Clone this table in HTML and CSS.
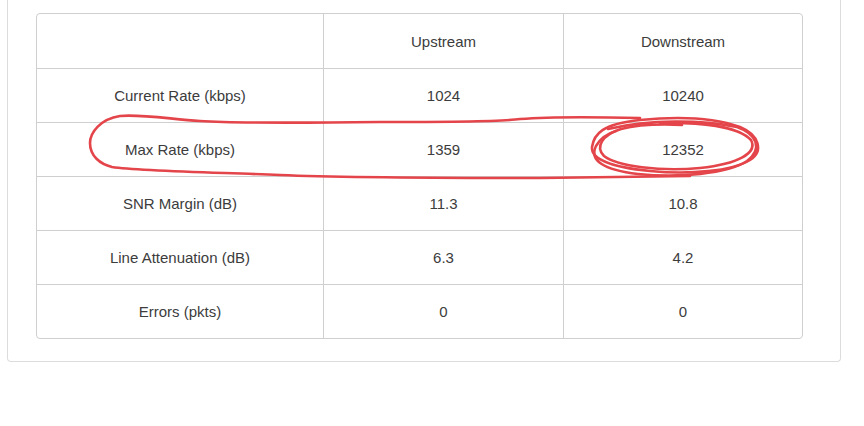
FILE: index.html
```html
<!DOCTYPE html>
<html lang="en">
<head>
<meta charset="utf-8">
<title>DSL Status</title>
<link rel="stylesheet" href="styles.css">
</head>
<body>
<div class="page">
  <div class="panel">
    <div class="table-wrap">
      <table class="stats">
        <thead>
          <tr><th class="label"></th><th>Upstream</th><th>Downstream</th></tr>
        </thead>
        <tbody>
          <tr><td class="label">Current Rate (kbps)</td><td>1024</td><td>10240</td></tr>
          <tr><td class="label">Max Rate (kbps)</td><td>1359</td><td>12352</td></tr>
          <tr><td class="label">SNR Margin (dB)</td><td>11.3</td><td>10.8</td></tr>
          <tr><td class="label">Line Attenuation (dB)</td><td>6.3</td><td>4.2</td></tr>
          <tr><td class="label">Errors (pkts)</td><td>0</td><td>0</td></tr>
        </tbody>
      </table>
    </div>
  </div>
  <svg class="marks" width="864" height="426" viewBox="0 0 864 426" aria-hidden="true">
    <g fill="none" stroke="#e4454a" stroke-width="2.6" stroke-linecap="round" stroke-linejoin="round">
      <path d="M640 118 C600 117 545 117 520 119 C500 122 440 122 380 122 C300 123 230 123 200 121 C170 119 140 114 120 116 C100 119 90 133 90 143 C90 156 100 164 112 167 C140 171 200 172 280 175 C350 178 450 178 540 178 C600 177 650 177 690 176"/>
      <path d="M640 120 C602 124 594 134 592 147 C591 159 610 167 650 171 C690 175 732 171 750 160 C764 151 759 135 740 127 C715 118 680 116 640 120 Z"/>
      <path d="M608 129 C650 119 702 120 737 127 C757 134 763 149 747 161 C728 174 678 178 638 174 C603 170 589 160 596 146 C600 139 606 134 616 131"/>
      <path d="M660 123 C700 122 738 126 751 140 C758 153 738 164 700 168 C660 172 617 166 604 156 C595 147 602 135 621 129 C641 124 661 124 682 125"/>
    </g>
  </svg>
</div>
</body>
</html>
```

FILE: styles.css
```css
html, body {
  margin: 0;
  padding: 0;
  background: #ffffff;
}

.page {
  position: relative;
  width: 864px;
  height: 426px;
  overflow: hidden;
}

.panel {
  margin-left: 7px;
  width: 804px;
  box-sizing: content-box;
  border: 1px solid #dcdcdc;
  border-top: 0;
  border-radius: 0 0 4px 4px;
  padding: 13px 0 22px 28px;
}

.table-wrap {
  width: 765px;
  border: 1px solid #cfcfcf;
  border-radius: 4px;
  overflow: hidden;
}

.stats {
  width: 100%;
  border-collapse: separate;
  border-spacing: 0;
  table-layout: fixed;
  font-family: "Liberation Sans", Arial, Helvetica, sans-serif;
  font-size: 15px;
  color: #3c3c3c;
}

.stats th,
.stats td {
  text-align: center;
  vertical-align: middle;
  font-weight: normal;
  padding: 0;
  border-right: 1px solid #cfcfcf;
  border-bottom: 1px solid #cfcfcf;
}

.stats th {
  height: 54px;
}

.stats td {
  height: 53px;
}

.stats th:last-child,
.stats td:last-child {
  border-right: 0;
}

.stats tbody tr:last-child td {
  border-bottom: 0;
}

.stats .label {
  width: 286px;
}

.stats th:nth-child(2),
.stats td:nth-child(2) {
  width: 239px;
}

.marks {
  position: absolute;
  left: 0;
  top: 0;
  pointer-events: none;
}
```
